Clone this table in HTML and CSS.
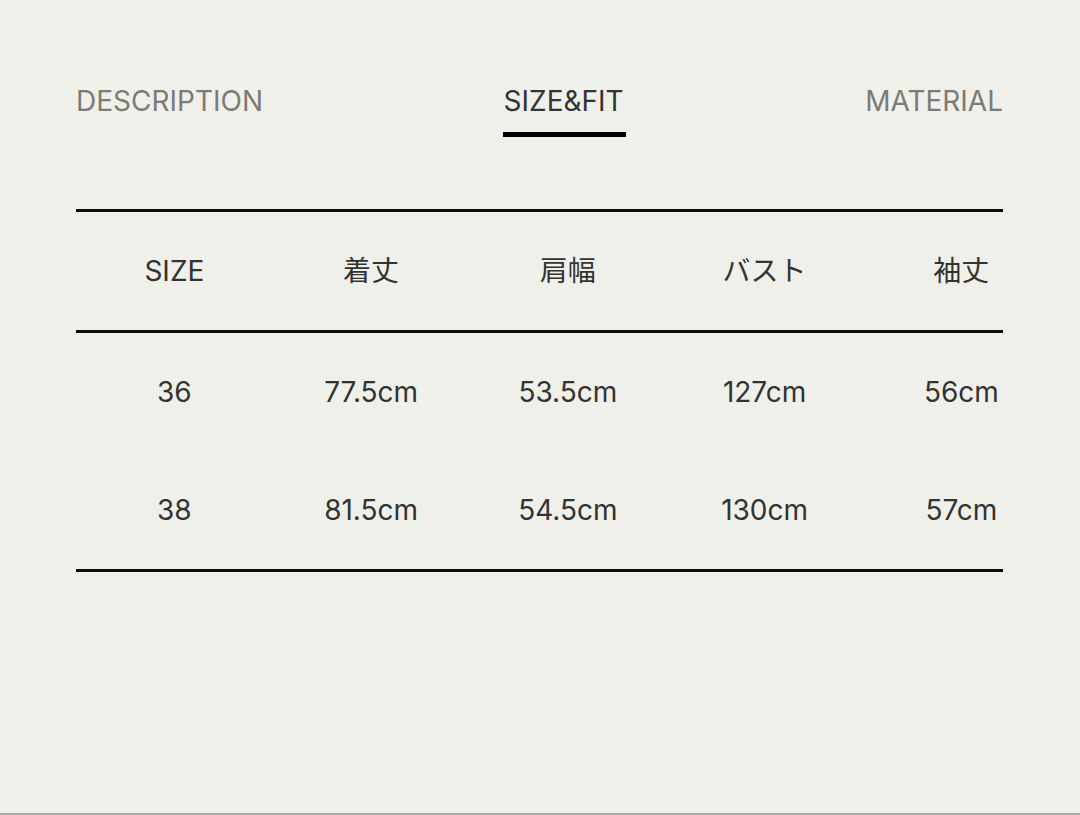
FILE: index.html
```html
<!DOCTYPE html>
<html lang="ja">
<head>
<meta charset="utf-8">
<title>SIZE&amp;FIT</title>
<link rel="stylesheet" href="styles.css">
</head>
<body>
<div class="page">
  <nav class="tabs">
    <div class="tab">DESCRIPTION</div>
    <div class="tab active">SIZE&amp;FIT</div>
    <div class="tab">MATERIAL</div>
  </nav>
  <div class="table">
    <div class="row head">
      <div class="cell">SIZE</div>
      <div class="cell">着丈</div>
      <div class="cell">肩幅</div>
      <div class="cell">バスト</div>
      <div class="cell">袖丈</div>
    </div>
    <div class="row">
      <div class="cell">36</div>
      <div class="cell">77.5cm</div>
      <div class="cell">53.5cm</div>
      <div class="cell">127cm</div>
      <div class="cell">56cm</div>
    </div>
    <div class="row last">
      <div class="cell">38</div>
      <div class="cell">81.5cm</div>
      <div class="cell">54.5cm</div>
      <div class="cell">130cm</div>
      <div class="cell">57cm</div>
    </div>
  </div>
</div>
</body>
</html>
```

FILE: styles.css
```css
html, body {
  margin: 0;
  padding: 0;
}

body {
  background: #f0f0eb;
  height: 815px;
  box-sizing: border-box;
  border-bottom: 2px solid #a9a9a5;
  font-family: Inter, "Noto Sans CJK JP", sans-serif;
  color: #333331;
  overflow: hidden;
}

.page {
  width: 927px;
  margin-left: 76px;
  padding-top: 84px;
}

.tabs {
  display: flex;
  justify-content: space-between;
}

.tab {
  font-size: 28px;
  line-height: 34px;
  color: #7b7b76;
  padding-bottom: 14px;
  border-bottom: 5px solid transparent;
}

.tab.active {
  color: #333331;
  border-bottom-color: #000;
  padding-left: 1px;
  padding-right: 2px;
}

.table {
  margin-top: 72px;
  border-top: 3px solid #0d0d0d;
}

.row {
  display: grid;
  grid-template-columns: repeat(5, 196.75px);
  height: 118px;
  align-items: center;
}

.row.head {
  border-bottom: 3px solid #0d0d0d;
}

.row.last {
  border-bottom: 3px solid #0d0d0d;
}

.cell {
  text-align: center;
  font-size: 28px;
  line-height: 34px;
}
```
